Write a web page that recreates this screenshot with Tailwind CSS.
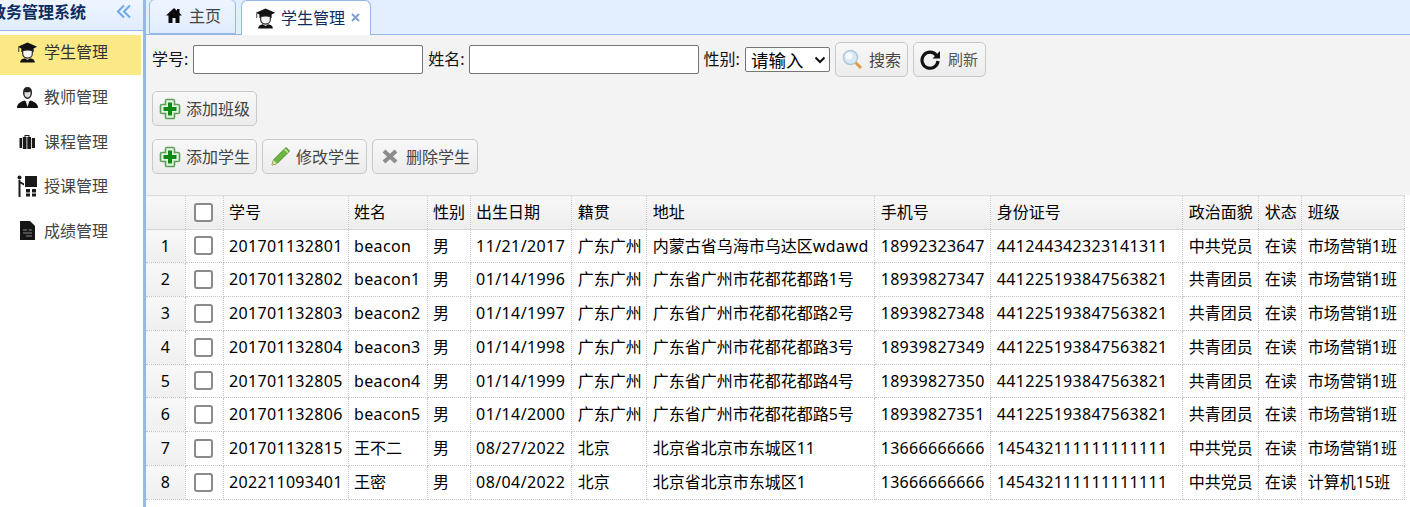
<!DOCTYPE html>
<html lang="zh">
<head>
<meta charset="utf-8">
<script src="https://cdn.jsdelivr.net/npm/@tailwindcss/browser@4"></script>
</head>
<body class="bg-white overflow-hidden font-['Noto_Sans','Noto_Sans_CJK_SC',sans-serif] text-[16px]">
<svg class="hidden"><defs>
<symbol id="grad" viewBox="0 0 24 24"><path d="M12 1 1 6 5 8V12H19V8L23 6Z" fill="#111"/><path d="M2 6.500V12" stroke="#222" stroke-width="1"/><path d="M6.500 10.500C8 9.500 16 9.500 17.500 10.500V14C17.500 17 15 19 12 19S6.500 17 6.500 14Z" fill="#f4f4f4" stroke="#222" stroke-width="1.300"/><path d="M3.500 24C3.500 21 6 19.500 9 19L12 21 15 19C18 19.500 20.500 21 20.500 24Z" fill="#111"/></symbol>
<symbol id="plus" viewBox="0 0 22 22"><path d="M7.500 1.500H14.500C15.500 1.500 15.500 2.500 15.500 3.500V6.500H18.500C19.500 6.500 20.500 6.500 20.500 7.500V14.500C20.500 15.500 19.500 15.500 18.500 15.500H15.500V18.500C15.500 19.500 15.500 20.500 14.500 20.500H7.500C6.500 20.500 6.500 19.500 6.500 18.500V15.500H3.500C2.500 15.500 1.500 15.500 1.500 14.500V7.500C1.500 6.500 2.500 6.500 3.500 6.500H6.500V3.500C6.500 2.500 6.500 1.500 7.500 1.500Z" fill="#e6f3e2" stroke="#5f9c5a" stroke-width="1.600"/><path d="M9 4.500H13V9H17.500V13H13V17.500H9V13H4.500V9H9Z" fill="#0d8a13"/></symbol>
</defs></svg>
<div class="flex h-[507px] w-[1410px] overflow-hidden">
  <aside class="w-[143px] shrink-0 bg-white">
    <div class="h-[31px] border-b border-[#95b8e7] bg-gradient-to-b from-[#eff5ff] to-[#e0ecff] flex items-center justify-between overflow-hidden pr-[11px]">
      <span class="ml-[-10px] whitespace-nowrap text-[16px] font-bold text-[#0e2d5f] leading-[24px] pb-[7px]">教务管理系统</span>
      <svg class="w-[16px] h-[16px] mb-[7px]" viewBox="0 0 16 16" fill="none" stroke="#6ea8e6" stroke-width="2"><path d="M8 1.500 2 7.500 8 13.500M14 1.500 8 7.500 14 13.500"/></svg>
    </div>
    <nav class="pt-[4px] pr-[2px] text-[#444]">
      <div class="h-[40px] bg-[#fbe986] flex items-center pl-[17px] gap-[6px] pb-[6px]"><svg class="w-[21px] h-[24px]"><use href="#grad"/></svg><span class="text-[#333]">学生管理</span></div>
      <div class="h-[44.500px] flex items-center pl-[17px] gap-[6px]"><svg class="w-[21px] h-[22px]" viewBox="0 0 21 22"><path d="M10.500 1C7.500 1 6 3 6 6.500 6 10 8 13 10.500 13S15 10 15 6.500C15 3 13.500 1 10.500 1Z" fill="#222"/><path d="M7.500 6C9 6.500 12 6.500 13.500 5.500V8C13.500 10 12 11.500 10.500 11.500S7.500 10 7.500 8Z" fill="#ddd"/><path d="M0 22C0 18 3 16 7.500 14.500L10.500 16.500 13.500 14.500C18 16 21 18 21 22Z" fill="#111"/><path d="M8.800 15.500H12.200L10.500 21Z" fill="#eee"/></svg><span>教师管理</span></div>
      <div class="h-[44.500px] flex items-center pl-[19px] gap-[8px]"><svg class="w-[17px] h-[16px]" viewBox="0 0 17 16" fill="#1a1a1a"><path d="M5.500 3V1H10.500V3H9.500V2H6.500V3Z"/><path d="M0.500 4H3V14H0.500ZM3.800 3H7.500V15H3.800ZM8.300 3H12V15H8.300ZM12.800 4H16V14H12.800Z"/></svg><span>课程管理</span></div>
      <div class="h-[44.500px] flex items-center pl-[17px] gap-[6px]"><svg class="w-[21px] h-[22px]" viewBox="0 0 21 22" fill="#1a1a1a"><circle cx="2.500" cy="2.500" r="2"/><path d="M1.500 5H3.500V22H1.500ZM3.500 6.500 7 8.500V10.500L3.500 8.500Z"/><path d="M8 1H20V12H8Z"/><path d="M9 14H13V17.500H9ZM15 14H19V17.500H15ZM9 18.500H13V21.500H9ZM15 18.500H19V21.500H15Z"/></svg><span>授课管理</span></div>
      <div class="h-[44.500px] flex items-center pl-[20px] gap-[9px]"><svg class="w-[15px] h-[19px]" viewBox="0 0 15 19"><path d="M0 0H10L15 5V19H0Z" fill="#151515"/><path d="M3 9H7M8.500 9H12M3 12H12M6 15H12" stroke="#888" stroke-width="1.200"/></svg><span>成绩管理</span></div>
    </nav>
  </aside>
  <div class="w-[3px] shrink-0 bg-[#95b8e7]"></div>
  <main class="flex-1 min-w-0 flex flex-col">
    <div class="h-[35px] shrink-0 bg-[#e3eeff] border-b border-[#95b8e7] flex items-end pl-[3px] gap-[5px] relative text-[#0e2d5f]">
      <div class="w-[87px] h-[35px] border border-[#95b8e7] rounded-t-[6px] bg-gradient-to-b from-[#eff5ff] to-[#e0ecff] flex items-center pl-[16px] gap-[7px] text-[#444] pb-[2px] -mt-px">
        <svg class="w-[16px] h-[15px]" viewBox="0 0 16 15" fill="#0a0a0a"><path d="M8 0 0 7.500H2.500V15H6.500V10H9.500V15H13.500V7.500H16L13.500 5V1H11V2.800Z"/></svg><span>主页</span></div>
      <div class="w-[130px] h-[35px] border border-b-0 border-[#95b8e7] rounded-t-[6px] bg-white flex items-center pl-[13px] pb-[1px] relative -mb-px">
        <svg class="w-[21px] h-[24px] mr-[5px] shrink-0"><use href="#grad"/></svg><span class="text-[#0e2d5f] whitespace-nowrap">学生管理</span><svg class="w-[9px] h-[9px] ml-[6px]" viewBox="0 0 9 9" stroke="#7f9fd0" stroke-width="2"><path d="M1 1 8 8M8 1 1 8"/></svg></div>
    </div>
    <div class="h-[160px] shrink-0 bg-[#f3f3f3] pl-[6px] text-[#111] relative">
      <div class="h-[49px] flex items-center">
        <span class="pb-[1px]">学号:</span><div class="ml-[5px] w-[230px] h-[29px] bg-white border border-[#767676] rounded-[2px]"></div>
        <span class="ml-[5px] pb-[1px]">姓名:</span><div class="ml-[4px] w-[230px] h-[29px] bg-white border border-[#767676] rounded-[2px]"></div>
        <span class="ml-[5px] pb-[1px]">性别:</span>
        <div class="ml-[5px] w-[85px] h-[25px] bg-white border border-[#767676] rounded-[2px] flex items-center pl-[5px] justify-between pr-[3px] text-black"><span class="text-[17.500px] leading-[22px]">请输入</span><svg class="w-[12px] h-[8px]" viewBox="0 0 12 8" fill="none" stroke="#111" stroke-width="2"><path d="M1.500 1.500 6 6 10.500 1.500"/></svg></div>
        <div class="ml-[5px] w-[73px] h-[35px] rounded-[5px] border border-[#c8c8c8] bg-gradient-to-b from-[#f8f8f8] to-[#ececec] flex items-center pl-[6px] gap-[6px] text-[#444]"><svg class="w-[21px] h-[21px] shrink-0" viewBox="0 0 21 21"><path d="M13 13 19 19" stroke="#e09a45" stroke-width="3"/><circle cx="8.500" cy="8.500" r="7" fill="#d6e8f8" stroke="#b5c5d3" stroke-width="1.500"/><circle cx="7" cy="7" r="3.500" fill="#f4faff"/></svg><span>搜索</span></div>
        <div class="ml-[5px] w-[73px] h-[35px] rounded-[5px] border border-[#c8c8c8] bg-gradient-to-b from-[#f8f8f8] to-[#ececec] flex items-center pl-[6px] gap-[7px] text-[#555]"><svg class="w-[21px] h-[21px] shrink-0" viewBox="0 0 21 21" fill="none"><path d="M16.500 6.500A8 8 0 1 0 18 12" stroke="#111" stroke-width="3.200"/><path d="M20 2V9.500H12.500Z" fill="#111"/></svg><span class="text-[15px]">刷新</span></div>
      </div>
      <div class="h-[55px] flex items-start pt-[7px]">
        <div class="w-[105px] h-[35px] rounded-[5px] border border-[#c8c8c8] bg-gradient-to-b from-[#f8f8f8] to-[#ececec] flex items-center pl-[6px] gap-[5px] text-[#444]"><svg class="w-[22px] h-[22px] shrink-0"><use href="#plus"/></svg><span>添加班级</span></div>
      </div>
      <div class="flex gap-[5px]">
        <div class="w-[105px] h-[35px] rounded-[5px] border border-[#c8c8c8] bg-gradient-to-b from-[#f8f8f8] to-[#ececec] flex items-center pl-[6px] gap-[5px] text-[#444]"><svg class="w-[22px] h-[22px] shrink-0"><use href="#plus"/></svg><span>添加学生</span></div>
        <div class="w-[105px] h-[35px] rounded-[5px] border border-[#c8c8c8] bg-gradient-to-b from-[#f8f8f8] to-[#ececec] flex items-center pl-[7px] gap-[5px] text-[#444]"><svg class="w-[21px] h-[21px] shrink-0" viewBox="0 0 21 21"><path d="M16 1.500 19.500 5 7 17.500 2 19 3.500 14Z" fill="#6cb83c" stroke="#3d8a22"/><path d="M14.500 3 18 6.500" stroke="#c6e8a8" stroke-width="1.500"/><path d="M3.500 14 7 17.500 2 19Z" fill="#e8d9a8"/></svg><span>修改学生</span></div>
        <div class="w-[106px] h-[35px] rounded-[5px] border border-[#c8c8c8] bg-gradient-to-b from-[#f8f8f8] to-[#ececec] flex items-center pl-[9px] gap-[8px] text-[#444]"><svg class="w-[16px] h-[15px] shrink-0" viewBox="0 0 16 15" stroke="#8c8c8c" stroke-width="4"><path d="M2 2 14 13M14 2 2 13"/></svg><span>删除学生</span></div>
      </div>
    </div>
    <table class="table-fixed border-collapse w-[1259px] text-black leading-[20px] bg-white">
      <colgroup><col class="w-[39px]"><col class="w-[38px]"><col class="w-[125px]"><col class="w-[79px]"><col class="w-[43px]"><col class="w-[101px]"><col class="w-[75px]"><col class="w-[228px]"><col class="w-[116px]"><col class="w-[192px]"><col class="w-[76px]"><col class="w-[43px]"><col class="w-[103px]"></colgroup>
      <tbody class="[&_td]:border-r [&_td]:border-b [&_td]:border-dotted [&_td]:border-[#c4c4c4] [&_td]:px-[5.500px] [&_td]:pb-[1px] [&_td]:whitespace-nowrap [&_td]:overflow-hidden [&_td:nth-child(n+7)]:pl-[6px] [&_td:first-child]:bg-gradient-to-b [&_td:first-child]:from-[#f8f8f8] [&_td:first-child]:to-[#efefef] [&_td:first-child]:text-center [&_td:first-child]:px-0 [&_td:nth-child(2)]:px-[8px] [&_td:nth-child(2)>div]:w-[19px] [&_td:nth-child(2)>div]:h-[19px] [&_td:nth-child(2)>div]:bg-white [&_td:nth-child(2)>div]:border-2 [&_td:nth-child(2)>div]:border-[#8a8a8a] [&_td:nth-child(2)>div]:rounded-[3px] [&_tr]:h-[34px] [&_tr:nth-child(2)]:h-[33px] [&_tr:nth-child(6)]:h-[33px] [&_tr:first-child_td]:bg-gradient-to-b [&_tr:first-child_td]:from-[#f8f8f8] [&_tr:first-child_td]:to-[#ededed] [&_tr:first-child_td]:border-t [&_tr:first-child_td]:[border-top-style:solid] [&_tr:first-child_td]:border-t-[#dedede] [&_tr:first-child_td]:[border-bottom-style:solid] [&_tr:first-child_td]:border-b-[#d8d8d8] [&_td:nth-child(3)]:tracking-[0.33px] [&_td:nth-child(6)]:tracking-[0.4px] [&_td:nth-child(9)]:tracking-[0.3px] [&_td:nth-child(10)]:tracking-[0.33px]">
        <tr><td></td><td><div></div></td><td class="tracking-normal!">学号</td><td>姓名</td><td>性别</td><td class="tracking-normal!">出生日期</td><td>籍贯</td><td>地址</td><td class="tracking-normal!">手机号</td><td class="tracking-normal!">身份证号</td><td>政治面貌</td><td>状态</td><td>班级</td></tr>
        <tr><td>1</td><td><div></div></td><td>201701132801</td><td class="tracking-[0.33px]">beacon</td><td>男</td><td>11/21/2017</td><td>广东广州</td><td>内蒙古省乌海市乌达区<span class="tracking-[0.5px]">wdawd</span></td><td>18992323647</td><td>441244342323141311</td><td>中共党员</td><td>在读</td><td>市场营销1班</td></tr>
        <tr><td>2</td><td><div></div></td><td>201701132802</td><td class="tracking-[0.33px]">beacon1</td><td>男</td><td>01/14/1996</td><td>广东广州</td><td>广东省广州市花都花都路1号</td><td>18939827347</td><td>441225193847563821</td><td>共青团员</td><td>在读</td><td>市场营销1班</td></tr>
        <tr><td>3</td><td><div></div></td><td>201701132803</td><td class="tracking-[0.33px]">beacon2</td><td>男</td><td>01/14/1997</td><td>广东广州</td><td>广东省广州市花都花都路2号</td><td>18939827348</td><td>441225193847563821</td><td>共青团员</td><td>在读</td><td>市场营销1班</td></tr>
        <tr><td>4</td><td><div></div></td><td>201701132804</td><td class="tracking-[0.33px]">beacon3</td><td>男</td><td>01/14/1998</td><td>广东广州</td><td>广东省广州市花都花都路3号</td><td>18939827349</td><td>441225193847563821</td><td>共青团员</td><td>在读</td><td>市场营销1班</td></tr>
        <tr><td>5</td><td><div></div></td><td>201701132805</td><td class="tracking-[0.33px]">beacon4</td><td>男</td><td>01/14/1999</td><td>广东广州</td><td>广东省广州市花都花都路4号</td><td>18939827350</td><td>441225193847563821</td><td>共青团员</td><td>在读</td><td>市场营销1班</td></tr>
        <tr><td>6</td><td><div></div></td><td>201701132806</td><td class="tracking-[0.33px]">beacon5</td><td>男</td><td>01/14/2000</td><td>广东广州</td><td>广东省广州市花都花都路5号</td><td>18939827351</td><td>441225193847563821</td><td>共青团员</td><td>在读</td><td>市场营销1班</td></tr>
        <tr><td>7</td><td><div></div></td><td>201701132815</td><td>王不二</td><td>男</td><td>08/27/2022</td><td>北京</td><td>北京省北京市东城区11</td><td>13666666666</td><td>145432111111111111</td><td>中共党员</td><td>在读</td><td>市场营销1班</td></tr>
        <tr><td>8</td><td><div></div></td><td>202211093401</td><td>王密</td><td>男</td><td>08/04/2022</td><td>北京</td><td>北京省北京市东城区1</td><td>13666666666</td><td>145432111111111111</td><td>中共党员</td><td>在读</td><td>计算机15班</td></tr>
      </tbody>
    </table>
  </main>
</div>
</body>
</html>
